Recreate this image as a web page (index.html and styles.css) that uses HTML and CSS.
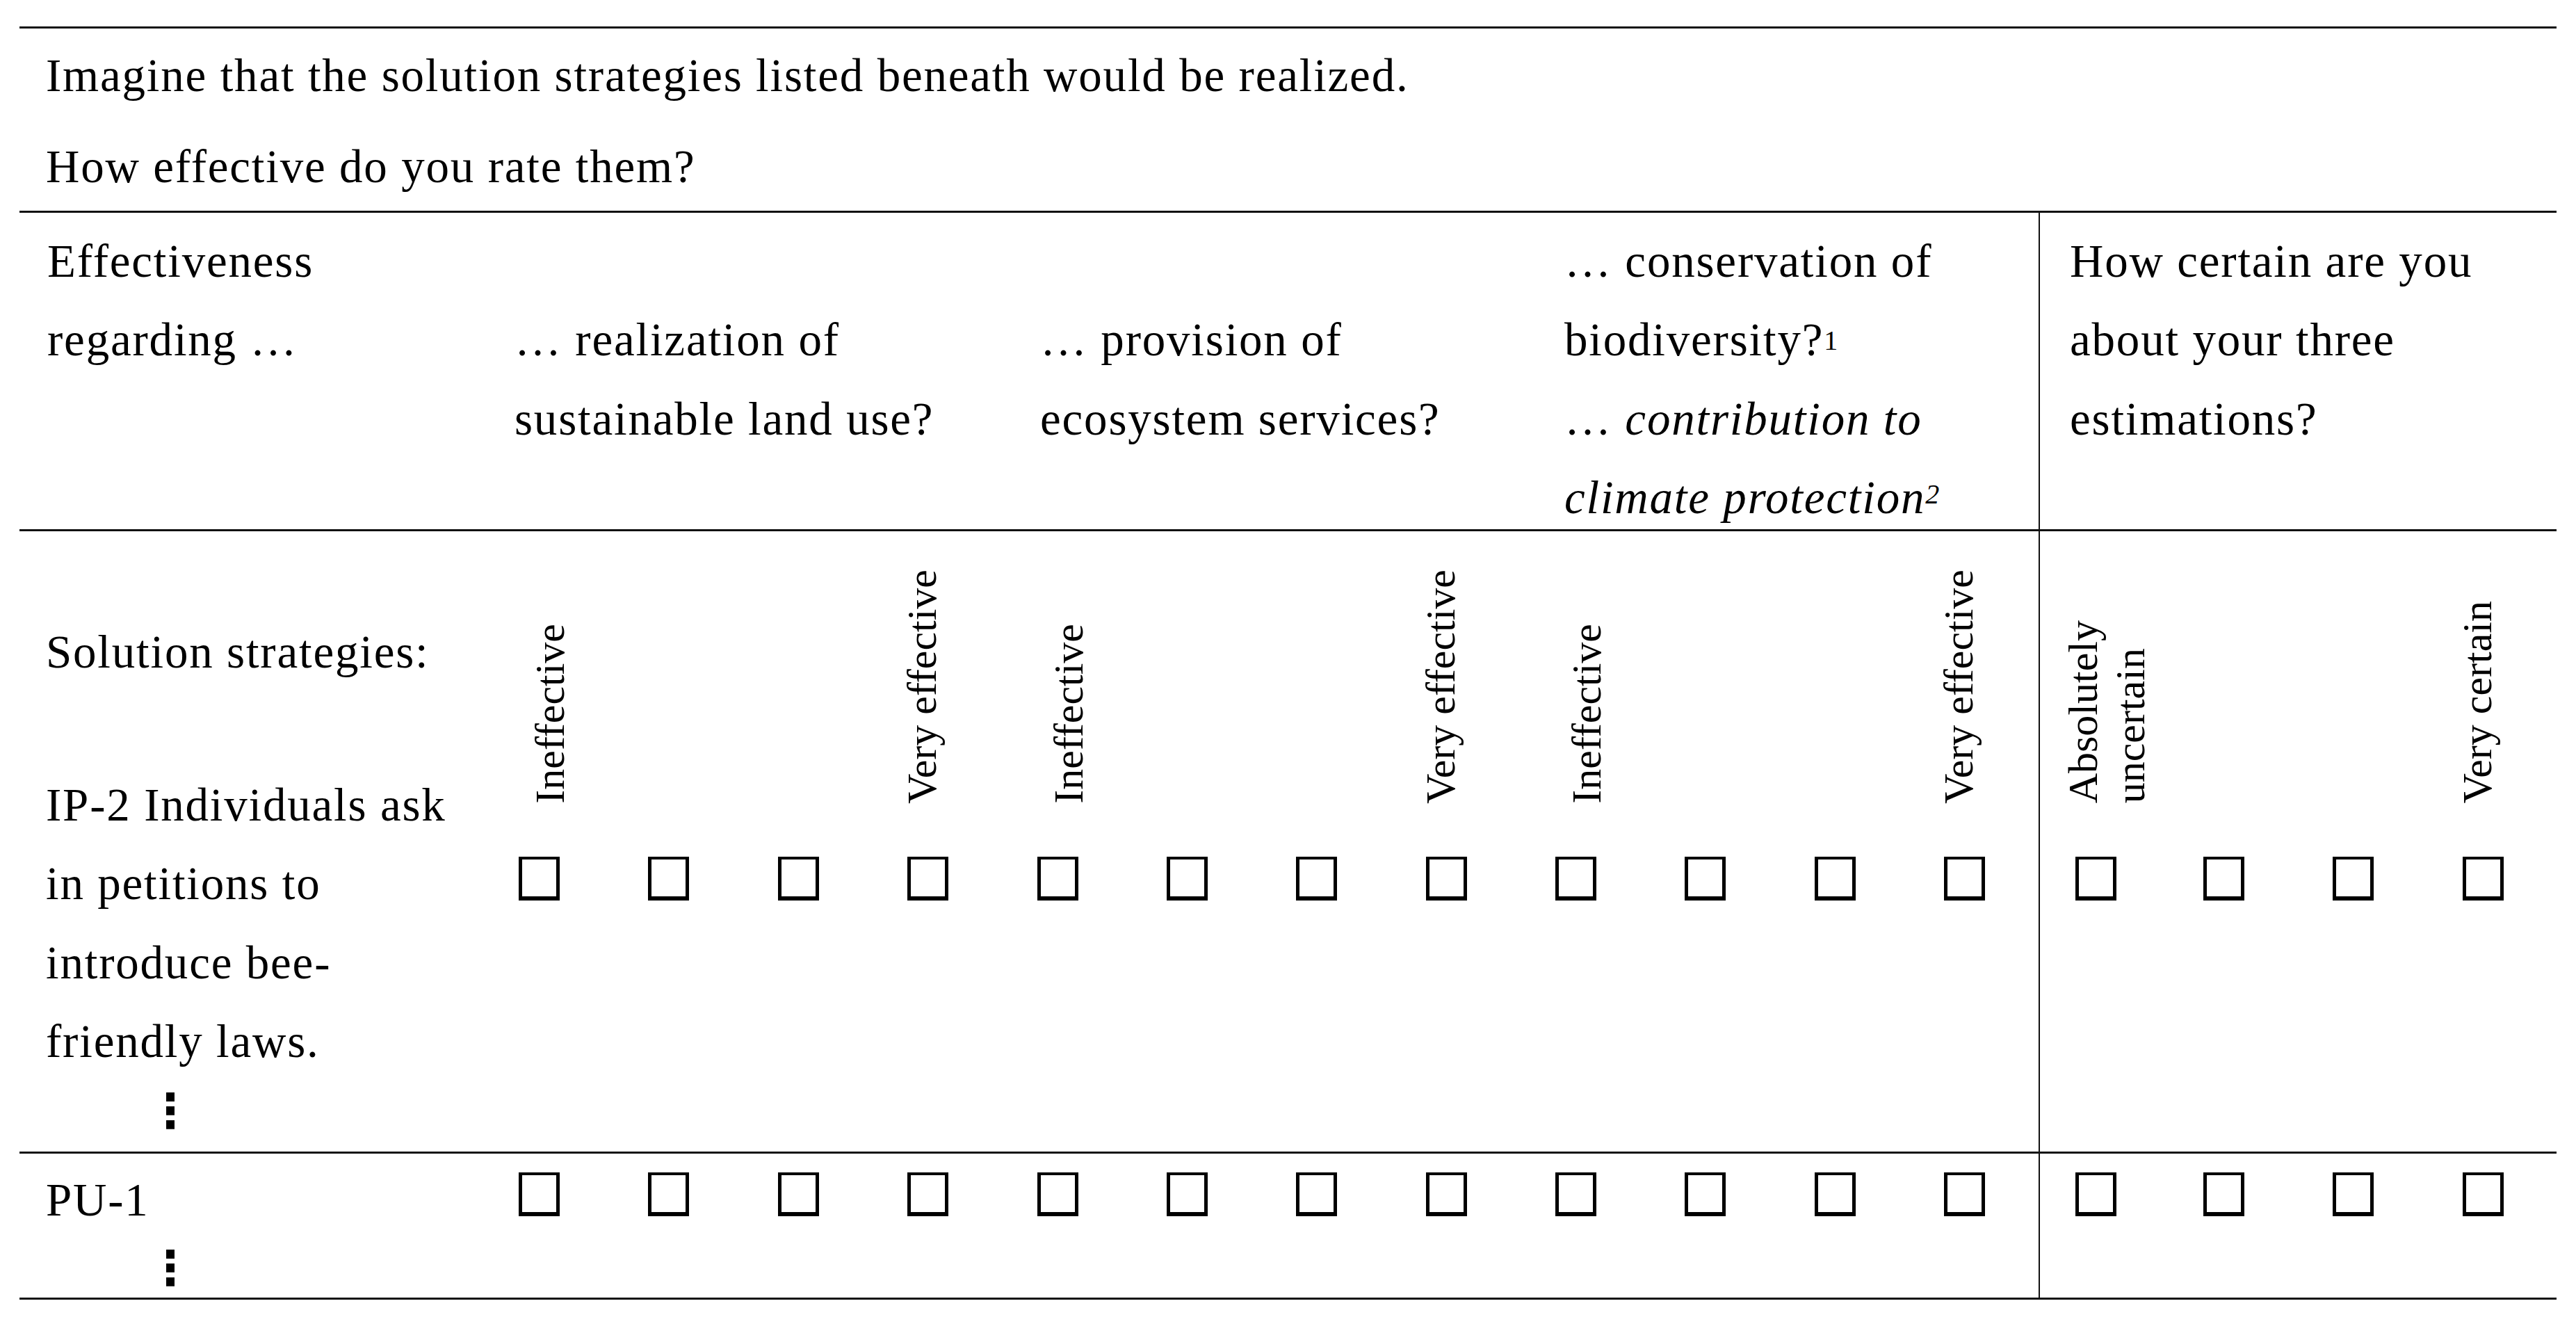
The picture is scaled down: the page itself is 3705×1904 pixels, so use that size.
FILE: index.html
```html
<!DOCTYPE html>
<html lang="en">
<head>
<meta charset="utf-8">
<title>Solution strategies questionnaire</title>
<link rel="stylesheet" href="styles.css">
</head>
<body>
<div class="sheet">
  <div class="tbl">
    <div class="intro">
      <p class="para">Imagine that the solution strategies listed beneath would be realized.</p>
      <p class="para">How effective do you rate them?</p>
    </div>
    <div class="head">
      <div class="hcell">Effectiveness<br>regarding …</div>
      <div class="hcell low">… realization of<br>sustainable land use?</div>
      <div class="hcell low">… provision of<br>ecosystem services?</div>
      <div class="hcell">… conservation of<br>biodiversity?<sup class="s1">1</sup><br>… <i>contribution to<br>climate protection</i><sup class="s2">2</sup></div>
      <div class="hcell cert">How certain are you<br>about your three<br>estimations?</div>
    </div>
    <div class="row main">
      <div class="lead">
        <p class="sol">Solution strategies:</p>
        <p class="item">IP-2 Individuals ask<br>in petitions to<br>introduce bee-<br>friendly laws.</p>
        <div class="vdots first">⋮</div>
      </div>
      <div class="opt"><div class="labels"><span class="vl lo">Ineffective</span></div><span class="box"></span></div>
      <div class="opt"><div class="labels"></div><span class="box"></span></div>
      <div class="opt"><div class="labels"></div><span class="box"></span></div>
      <div class="opt"><div class="labels"><span class="vl hi">Very effective</span></div><span class="box"></span></div>
      <div class="opt"><div class="labels"><span class="vl lo">Ineffective</span></div><span class="box"></span></div>
      <div class="opt"><div class="labels"></div><span class="box"></span></div>
      <div class="opt"><div class="labels"></div><span class="box"></span></div>
      <div class="opt"><div class="labels"><span class="vl hi">Very effective</span></div><span class="box"></span></div>
      <div class="opt"><div class="labels"><span class="vl lo">Ineffective</span></div><span class="box"></span></div>
      <div class="opt"><div class="labels"></div><span class="box"></span></div>
      <div class="opt"><div class="labels"></div><span class="box"></span></div>
      <div class="opt"><div class="labels"><span class="vl hi">Very effective</span></div><span class="box"></span></div>
      <div class="opt cert"><div class="labels"><span class="vl two">Absolutely<br>uncertain</span></div><span class="box"></span></div>
      <div class="opt"><div class="labels"></div><span class="box"></span></div>
      <div class="opt"><div class="labels"></div><span class="box"></span></div>
      <div class="opt"><div class="labels"><span class="vl hi">Very certain</span></div><span class="box"></span></div>
    </div>
    <div class="row second">
      <div class="lead">
        <p class="item pu">PU-1</p>
        <div class="vdots">⋮</div>
      </div>
      <div class="opt"><span class="box"></span></div>
      <div class="opt"><span class="box"></span></div>
      <div class="opt"><span class="box"></span></div>
      <div class="opt"><span class="box"></span></div>
      <div class="opt"><span class="box"></span></div>
      <div class="opt"><span class="box"></span></div>
      <div class="opt"><span class="box"></span></div>
      <div class="opt"><span class="box"></span></div>
      <div class="opt"><span class="box"></span></div>
      <div class="opt"><span class="box"></span></div>
      <div class="opt"><span class="box"></span></div>
      <div class="opt"><span class="box"></span></div>
      <div class="opt cert"><span class="box"></span></div>
      <div class="opt"><span class="box"></span></div>
      <div class="opt"><span class="box"></span></div>
      <div class="opt"><span class="box"></span></div>
    </div>
  </div>
</div>
</body>
</html>
```
FILE: styles.css
```css
html, body {
  margin: 0;
  padding: 0;
  background: #fff;
}
body {
  width: 3705px;
  height: 1904px;
  font-family: "Liberation Serif", "Times New Roman", serif;
  color: #000;
  overflow: hidden;
}
.sheet {
  padding: 38px 28px 0;
}
.tbl {
  border-top: 3px solid #111;
  border-bottom: 3px solid #111;
}
.para, .hcell, .sol, .item {
  font-size: 67px;
  line-height: 113.4px;
  letter-spacing: 1.8px;
  white-space: nowrap;
  margin: 0;
}
.intro {
  padding: 11px 38px 6px;
  border-bottom: 3px solid #111;
}
.para + .para {
  margin-top: 18px;
}
.head {
  display: grid;
  grid-template-columns: 672px 756px 754px 722px 745px;
  grid-template-rows: 455px;
  border-bottom: 3px solid #111;
}
.hcell {
  padding: 13px 0 0 40px;
}
.hcell.low {
  padding-top: 126.4px;
}
.hcell.cert {
  border-left: 2px solid #111;
  padding-left: 43px;
}
sup {
  font-size: 40px;
  line-height: 0;
  letter-spacing: 0;
}
.s1 { vertical-align: 8px; }
.s2 { vertical-align: 14px; font-style: italic; }
.row {
  display: grid;
  grid-template-columns: 667px repeat(16, 1fr);
}
.row.main {
  grid-template-rows: 892px;
  border-bottom: 3px solid #111;
}
.row.second {
  grid-template-rows: 207px;
}
.lead {
  padding-left: 38px;
}
.sol {
  padding-top: 117px;
}
.item {
  margin-top: 106.6px;
}
.item.pu {
  margin-top: 0;
  padding-top: 10px;
}
.vdots {
  font-family: "DejaVu Sans", sans-serif;
  font-weight: bold;
  font-size: 68px;
  line-height: 60px;
  padding-left: 145px;
  margin-top: 12px;
}
.vdots.first {
  margin-top: 14px;
}
.opt {
  display: flex;
  flex-direction: column;
  align-items: flex-start;
}
.opt.cert {
  border-left: 2px solid #111;
}
.labels {
  height: 392px;
  display: flex;
  align-items: flex-end;
}
.vl {
  writing-mode: vertical-rl;
  transform: rotate(180deg);
  font-size: 60px;
  line-height: 68px;
  white-space: nowrap;
}
.vl.lo { margin-left: 62px; }
.vl.hi { margin-left: 38px; }
.vl.two { margin-left: 28px; }
.box {
  display: block;
  box-sizing: border-box;
  width: 59px;
  height: 63px;
  border-style: solid;
  border-color: #000;
  border-width: 4px 5px 6px;
  margin: 76px 0 0 51px;
}
.cert .box {
  margin-left: 51px;
}
.second .box {
  margin-top: 27px;
}
```
